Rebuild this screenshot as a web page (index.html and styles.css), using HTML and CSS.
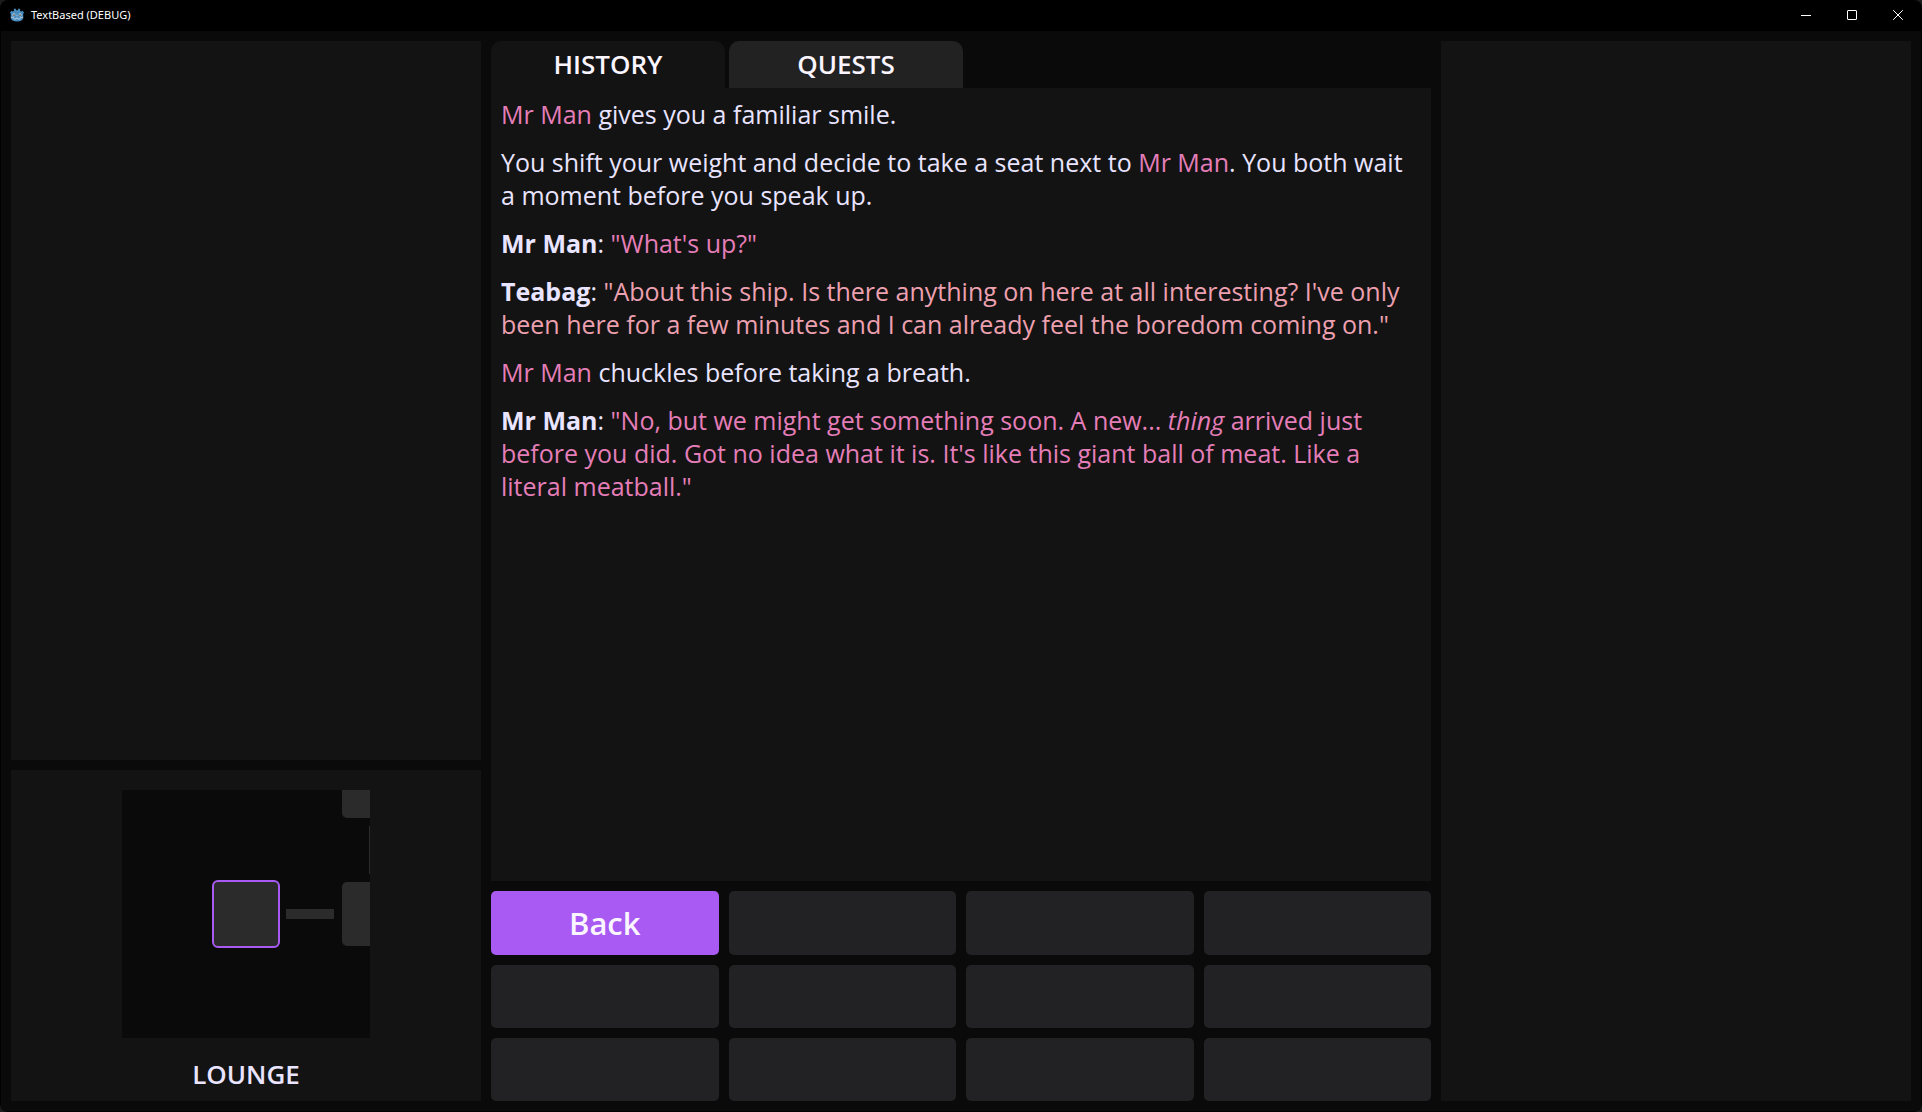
FILE: index.html
```html
<!DOCTYPE html>
<html lang="en">
<head>
<meta charset="utf-8">
<title>TextBased (DEBUG)</title>
<link rel="stylesheet" href="styles.css">
</head>
<body>
<div class="window">
  <header class="titlebar">
    <svg class="app-icon" viewBox="0 0 16 16" aria-hidden="true">
      <path fill="#478cbf" d="M1 5.500 2.500 3.800 3.800 4.500 5 3.800 4.800 2 6.500 1.500 7.300 3.200H8.700L9.500 1.500 11.200 2 11 3.800 12.200 4.500 13.500 3.800 15 5.500 14.200 7V11.200Q13 14.500 8 14.500 3 14.500 1.800 11.200V7Z"/>
      <path fill="none" stroke="#d5e3ee" stroke-width=".7" d="M1.800 10.200 4.600 10.600 5 12 7 12.100 7.200 11H8.800L9 12.100 11 12 11.400 10.600 14.200 10.200M8 7.800V9.300"/>
      <circle cx="4.900" cy="8" r="1.400" fill="#e8eef3"/><circle cx="11.100" cy="8" r="1.400" fill="#e8eef3"/>
      <circle cx="5" cy="8.100" r=".9" fill="#414042"/><circle cx="11" cy="8.100" r=".9" fill="#414042"/>
    </svg>
    <span class="titlebar-text">TextBased (DEBUG)</span>
    <div class="window-controls">
      <button class="window-button" aria-label="Minimize"><svg viewBox="0 0 10 10"><path d="M0 5.500H10"/></svg></button>
      <button class="window-button" aria-label="Maximize"><svg viewBox="0 0 10 10"><rect x=".5" y=".5" width="9" height="9" rx=".5"/></svg></button>
      <button class="window-button" aria-label="Close"><svg viewBox="0 0 10 10"><path d="M.2.2 9.800 9.800M9.800.2.2 9.800"/></svg></button>
    </div>
  </header>

  <main class="game">
    <section class="column">
      <div class="panel info-panel"></div>
      <div class="panel map-panel">
        <svg class="map" viewBox="0 0 248 248" role="img" aria-label="Map">
          <g fill="#2b2b2b">
            <rect x="220" y="-36" width="64" height="64" rx="5"/>
            <rect x="247" y="36" width="10" height="48"/>
            <rect x="164" y="119" width="48" height="10"/>
            <rect x="220" y="92" width="64" height="64" rx="5"/>
            <rect x="91" y="91" width="66" height="66" rx="5" stroke="#a85af2" stroke-width="2"/>
          </g>
        </svg>
        <h2 class="room-name">LOUNGE</h2>
      </div>
    </section>

    <section class="column">
      <div class="journal">
        <div class="tabs" role="tablist">
          <button class="tab tab-active" role="tab" aria-selected="true">HISTORY</button>
          <button class="tab" role="tab" aria-selected="false">QUESTS</button>
        </div>
        <div class="panel history" role="tabpanel">
          <p><span class="man">Mr Man</span> gives you a familiar smile.</p>
          <p>You shift your weight and decide to take a seat next to <span class="man">Mr Man</span>. You both wait a moment before you speak up.</p>
          <p><b>Mr Man</b>: <span class="man">"What's up?"</span></p>
          <p><b>Teabag</b>: <span class="teabag">"About this ship. Is there anything on here at all interesting? I've only been here for a few minutes and I can already feel the boredom coming on."</span></p>
          <p><span class="man">Mr Man</span> chuckles before taking a breath.</p>
          <p><b>Mr Man</b>: <span class="man">"No, but we might get something soon. A new... <i>thing</i> arrived just before you did. Got no idea what it is. It's like this giant ball of meat. Like a literal meatball."</span></p>
        </div>
      </div>
      <div class="actions">
        <button class="action action-filled">Back</button>
        <button class="action" disabled></button>
        <button class="action" disabled></button>
        <button class="action" disabled></button>
        <button class="action" disabled></button>
        <button class="action" disabled></button>
        <button class="action" disabled></button>
        <button class="action" disabled></button>
        <button class="action" disabled></button>
        <button class="action" disabled></button>
        <button class="action" disabled></button>
        <button class="action" disabled></button>
      </div>
    </section>

    <section class="panel"></section>
  </main>
</div>
</body>
</html>
```
FILE: styles.css
```css
* {
  box-sizing: border-box;
}

body {
  margin: 0;
  background: #1c1c1c;
  color: #e9e4ff;
  font-family: "Open Sans", "Noto Sans", sans-serif;
}

button {
  margin: 0;
  padding: 0;
  border: 0;
  background: none;
  color: inherit;
  font: inherit;
}

.window {
  display: flex;
  flex-direction: column;
  min-height: 100vh;
  padding: 0 1px 1px;
  border-radius: 8px;
  background: #000;
  overflow: hidden;
}

.titlebar {
  display: flex;
  align-items: center;
  gap: 6px;
  height: 31px;
  padding: 0 0 1px 8px;
  color: #fff;
}

.app-icon {
  width: 16px;
  height: 16px;
}

.titlebar-text {
  font-family: "Noto Sans", sans-serif;
  font-size: 11px;
  line-height: 16px;
}

.window-controls {
  display: flex;
  height: 100%;
  margin-left: auto;
}

.window-button {
  display: grid;
  place-items: center;
  width: 46px;
}

.window-button svg {
  width: 10px;
  height: 10px;
  fill: none;
  stroke: #fff;
}

.game {
  flex: 1;
  display: grid;
  grid-template-columns: 1fr 2fr 1fr;
  gap: 10px;
  padding: 10px;
  background: #0a0a0a;
}

.column,
.journal {
  display: flex;
  flex-direction: column;
  min-width: 0;
}

.column {
  gap: 10px;
}

.journal,
.info-panel {
  flex: 1;
}

.panel {
  background: #131313;
}

.map-panel {
  display: flex;
  flex-direction: column;
  align-items: center;
  gap: 20px;
  padding: 20px 10px 10px;
}

.map {
  width: 248px;
  height: 248px;
  background: #0a0a0a;
}

.room-name {
  margin: 0;
  font-size: 26px;
  font-weight: 600;
  line-height: 33px;
}

.tabs {
  display: flex;
  gap: 4px;
}

.tab {
  width: 234px;
  height: 47px;
  border-radius: 10px 10px 0 0;
  background: #222;
  color: #faf5ff;
  font-size: 26px;
  font-weight: 600;
  line-height: 33px;
}

.tab-active {
  background: #131313;
}

.history {
  display: flex;
  flex: 1;
  flex-direction: column;
  gap: 15px;
  padding: 10px;
  font-size: 25px;
  line-height: 33px;
}

.history p {
  margin: 0;
}

.man {
  color: #e57eb8;
}

.teabag {
  color: #eda0b0;
}

.actions {
  display: grid;
  grid-template-columns: repeat(4, 1fr);
  grid-template-rows: 64px 63px 63px;
  gap: 10px;
}

.action {
  border-radius: 5px;
  background: #222224;
}

.action-filled {
  background: #a85af2;
  color: #faf5ff;
  font-size: 31px;
  font-weight: 600;
  line-height: 40px;
}
```
